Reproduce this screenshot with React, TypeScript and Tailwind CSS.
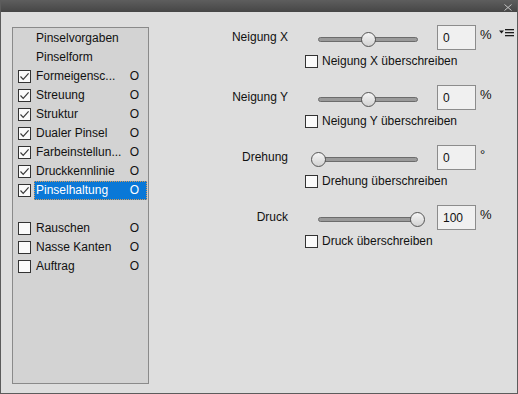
import React from "react";

type Item = { label: string; cb: boolean | null; lock: boolean; selected?: boolean } | null;

const items: Item[] = [
  { label: "Pinselvorgaben", cb: null, lock: false },
  { label: "Pinselform", cb: null, lock: false },
  { label: "Formeigensc...", cb: true, lock: true },
  { label: "Streuung", cb: true, lock: true },
  { label: "Struktur", cb: true, lock: true },
  { label: "Dualer Pinsel", cb: true, lock: true },
  { label: "Farbeinstellun...", cb: true, lock: true },
  { label: "Druckkennlinie", cb: true, lock: true },
  { label: "Pinselhaltung", cb: true, lock: true, selected: true },
  null,
  { label: "Rauschen", cb: false, lock: true },
  { label: "Nasse Kanten", cb: false, lock: true },
  { label: "Auftrag", cb: false, lock: true },
];

const groups = [
  { label: "Neigung X", value: "0", unit: "%", frac: 0.5, check: "Neigung X überschreiben", menu: true },
  { label: "Neigung Y", value: "0", unit: "%", frac: 0.5, check: "Neigung Y überschreiben" },
  { label: "Drehung", value: "0", unit: "°", frac: 0, check: "Drehung überschreiben" },
  { label: "Druck", value: "100", unit: "%", frac: 1, check: "Druck überschreiben" },
];

function CheckBox({ checked }: { checked: boolean }) {
  return (
    <div className="w-[13px] h-[13px] shrink-0 border border-[#333333] bg-[#fafafa] flex items-center justify-center">
      {checked && (
        <svg width="11" height="11" viewBox="0 0 11 11">
          <path d="M1.5 5.5 L4.2 8.3 L9.6 2.4" fill="none" stroke="#3a3a3a" strokeWidth="1.2" />
        </svg>
      )}
    </div>
  );
}

function Slider({ frac }: { frac: number }) {
  return (
    <div className="relative w-[100px] h-[15px] flex items-center mt-[4px] shrink-0">
      <div className="w-[100px] h-[5px] rounded-full bg-[#9a9a9a] border border-[#6c6c6c]" />
      <div
        className="absolute top-0 w-[15px] h-[15px] rounded-full border border-[#555555] bg-linear-to-b from-[#f6f6f6] to-[#d2d2d2]"
        style={{ left: `${frac * 99 - 7}px` }}
      />
    </div>
  );
}

export default function App() {
  return (
    <div className="w-[518px] h-[394px] flex flex-col bg-[#dedede] border-x border-b border-[#5c5c5c] font-['Liberation_Sans',Arial,sans-serif] text-[12px] text-[#111111] overflow-hidden">
      <div className="h-[12px] shrink-0 bg-linear-to-b from-[#5e5e5e] to-[#464646] flex justify-end items-start pr-[5px] pt-[4px]">
        <svg width="8" height="7" viewBox="0 0 8 7">
          <path d="M0.5 0.5 L7.5 6.5 M7.5 0.5 L0.5 6.5" stroke="#c4c4c4" strokeWidth="1" fill="none" />
        </svg>
      </div>
      <div className="flex flex-1">
        <div className="ml-[11px] mt-[15px] w-[137px] h-[357px] shrink-0 border border-[#8a8a8a] bg-[#d3d3d3] flex flex-col pt-[1px]">
          {items.map((it, i) =>
            it === null ? (
              <div key={i} className="h-[19px]" />
            ) : (
              <div key={i} className="h-[19px] flex items-center">
                <div className="ml-[5px] w-[13px] h-[13px] shrink-0">
                  {it.cb !== null && <CheckBox checked={it.cb} />}
                </div>
                <div
                  className={
                    "ml-[3px] mr-[1px] flex-1 h-[19px] flex items-center justify-between pl-[2px] pr-[8px] leading-[19px] " +
                    (it.selected ? "bg-[#0a78d7] text-white outline-1 outline-dotted outline-[#d99b55] -outline-offset-1" : "")
                  }
                >
                  <span>{it.label}</span>
                  {it.lock && <span>O</span>}
                </div>
              </div>
            )
          )}
        </div>
        <div className="ml-[51px] mt-[13px] flex flex-col gap-[17px]">
          {groups.map((g) => (
            <div key={g.label} className="flex flex-col">
              <div className="flex items-center h-[25px]">
                <div className="w-[88px] text-right shrink-0 -mt-[1px]">{g.label}</div>
                <div className="ml-[30px]">
                  <Slider frac={g.frac} />
                </div>
                <div className="ml-[19px] w-[39px] h-[25px] shrink-0 border border-[#8c8c8c] bg-[#f0f0f0] pl-[5px] flex items-center">
                  {g.value}
                </div>
                <div className="ml-[4px] w-[12px] self-start mt-[3px] leading-[14px] text-[13px] shrink-0">{g.unit}</div>
                {g.menu && (
                  <svg className="ml-[7px] self-start mt-[4px]" width="15" height="8" viewBox="0 0 15 8">
                    <path d="M0 1.5 L5 1.5 L2.5 4.5 Z" fill="#1c1c1c" />
                    <rect x="6" y="0" width="9" height="1.3" fill="#1c1c1c" />
                    <rect x="6" y="3" width="9" height="1.3" fill="#1c1c1c" />
                    <rect x="6" y="6" width="9" height="1.3" fill="#1c1c1c" />
                  </svg>
                )}
              </div>
              <div className="flex items-center h-[13px] mt-[5px] pl-[105px]">
                <CheckBox checked={false} />
                <span className="ml-[4px] leading-[13px]">{g.check}</span>
              </div>
            </div>
          ))}
        </div>
      </div>
    </div>
  );
}
